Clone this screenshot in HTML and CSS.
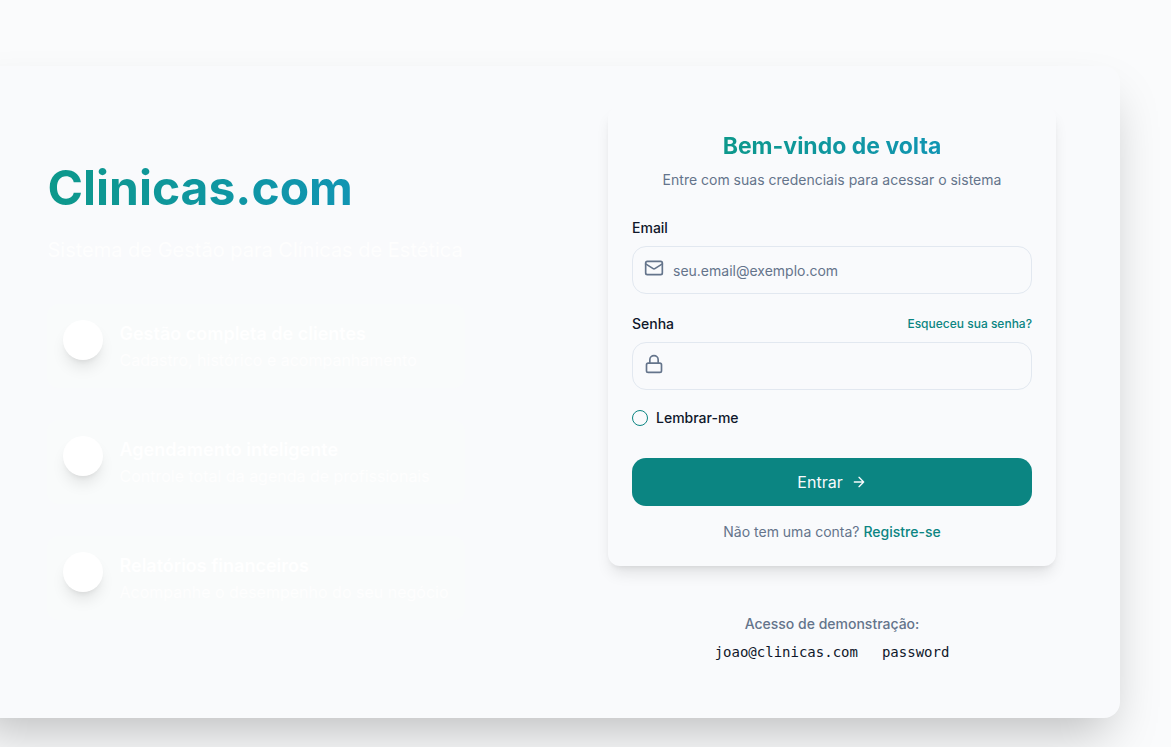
FILE: index.html
```html
<!DOCTYPE html>
<html lang="pt-BR">
<head>
<meta charset="utf-8">
<meta name="viewport" content="width=device-width, initial-scale=1">
<title>Clinicas.com</title>
<link rel="stylesheet" href="styles.css">
</head>
<body>
<main class="page">
  <div class="panel">
    <section class="intro">
      <div class="intro-content">
        <h1 class="brand"><span class="gradient-text">Clinicas.com</span></h1>
        <p class="tagline">Sistema de Gestão para Clínicas de Estética</p>
        <ul class="features">
          <li class="feature">
            <span class="feature-icon"></span>
            <div><h2 class="feature-title">Gestão completa de clientes</h2><p class="feature-text">Cadastro, histórico e acompanhamento</p></div>
          </li>
          <li class="feature">
            <span class="feature-icon"></span>
            <div><h2 class="feature-title">Agendamento inteligente</h2><p class="feature-text">Controle total da agenda de profissionais</p></div>
          </li>
          <li class="feature">
            <span class="feature-icon"></span>
            <div><h2 class="feature-title">Relatórios financeiros</h2><p class="feature-text">Acompanhe o desempenho do seu negócio</p></div>
          </li>
        </ul>
      </div>
    </section>
    <section class="access">
      <div class="card">
        <h2 class="welcome"><span class="gradient-text">Bem-vindo de volta</span></h2>
        <p class="lead">Entre com suas credenciais para acessar o sistema</p>
        <form class="form">
          <div class="field">
            <label class="label" for="email">Email</label>
            <div class="control">
              <svg class="control-icon" viewBox="0 0 24 24" aria-hidden="true"><rect x="2" y="4" width="20" height="16" rx="2"/><path d="m22 7-8.97 5.7a1.94 1.94 0 0 1-2.06 0L2 7"/></svg>
              <input class="input" id="email" type="email" placeholder="seu.email@exemplo.com">
            </div>
          </div>
          <div class="field">
            <div class="label-row">
              <label class="label" for="password">Senha</label>
              <a class="forgot" href="#">Esqueceu sua senha?</a>
            </div>
            <div class="control">
              <svg class="control-icon" viewBox="0 0 24 24" aria-hidden="true"><rect x="3" y="11" width="18" height="11" rx="2"/><path d="M7 11V7a5 5 0 0 1 10 0v4"/></svg>
              <input class="input" id="password" type="password">
            </div>
          </div>
          <div class="remember">
            <input class="check" id="remember" type="checkbox">
            <label class="label" for="remember">Lembrar-me</label>
          </div>
          <button class="submit" type="submit">Entrar
            <svg class="submit-icon" viewBox="0 0 24 24" aria-hidden="true"><path d="M5 12h14M12 5l7 7-7 7"/></svg>
          </button>
        </form>
        <p class="register">Não tem uma conta? <a class="register-link" href="#">Registre-se</a></p>
      </div>
      <div class="demo">
        <p class="demo-title">Acesso de demonstração:</p>
        <div class="demo-data"><code>joao@clinicas.com</code><code>password</code></div>
      </div>
    </section>
  </div>
</main>
</body>
</html>
```
FILE: styles.css
```css
:root {
  --primary: #0b8582;
  --ink: #0f172a;
  --muted: #64748b;
  --surface: #f9fafc;
  --line: #e2e8f0;
}
* { box-sizing: border-box; margin: 0; }
body {
  background: #fafbfc;
  color: var(--ink);
  font-family: Inter, "Liberation Sans", sans-serif;
  font-size: 14px;
  line-height: 20px;
}
a { text-decoration: none; }
.page {
  padding: 66px 51px 29px 0;
}
.panel {
  display: grid;
  grid-template-columns: 1fr 1fr;
  margin-left: -32px;
  background: var(--surface);
  border-radius: 16px;
  box-shadow: 0 25px 50px -12px rgba(0, 0, 0, 0.25);
}
.gradient-text {
  background: linear-gradient(to right, #0d988b, #1195b3);
  -webkit-background-clip: text;
  background-clip: text;
  color: transparent;
}
.intro {
  display: flex;
  align-items: center;
  justify-content: center;
  color: #fff;
}
.brand {
  font-size: 48px;
  line-height: 48px;
  font-weight: 700;
}
.tagline {
  margin: 24px 0 40px;
  font-size: 20px;
  line-height: 28px;
  color: #fefefe;
}
.features {
  display: grid;
  gap: 32px;
  padding: 0;
  list-style: none;
}
.feature {
  display: flex;
  align-items: flex-start;
  gap: 16px;
  padding: 16px;
  border-radius: 12px;
  background: #f9fbfb;
}
.feature-icon {
  flex: none;
  width: 40px;
  height: 40px;
  border-radius: 50%;
  background: #fff;
  box-shadow: 0 10px 15px -3px rgba(0, 0, 0, 0.1), 0 4px 6px -4px rgba(0, 0, 0, 0.1);
}
.feature-title {
  font-size: 18px;
  line-height: 28px;
  font-weight: 600;
}
.feature-text {
  font-size: 16px;
  line-height: 24px;
  color: #fefefe;
}
.access {
  display: flex;
  flex-direction: column;
  align-items: center;
  padding: 40px 48px 56px;
}
.card {
  width: 100%;
  max-width: 448px;
  padding: 24px;
  border-radius: 12px;
  background: var(--surface);
  box-shadow: 0 10px 15px -3px rgba(0, 0, 0, 0.1), 0 4px 6px -4px rgba(0, 0, 0, 0.1);
}
.welcome {
  font-size: 23px;
  line-height: 32px;
  font-weight: 700;
  text-align: center;
}
.lead {
  margin: 8px 0 28px;
  color: var(--muted);
  text-align: center;
}
.form {
  display: grid;
}
.field {
  margin-bottom: 20px;
}
.label {
  font-weight: 500;
}
.field > .label {
  display: block;
}
.label-row {
  display: flex;
  justify-content: space-between;
}
.forgot {
  font-size: 12px;
  font-weight: 500;
  color: var(--primary);
}
.control {
  position: relative;
  margin-top: 8px;
}
.control-icon {
  position: absolute;
  top: 12px;
  left: 12px;
  width: 20px;
  height: 20px;
  fill: none;
  stroke: var(--muted);
  stroke-width: 2;
  stroke-linecap: round;
  stroke-linejoin: round;
}
.input {
  display: block;
  width: 100%;
  height: 48px;
  padding: 8px 12px 8px 40px;
  border: 1px solid var(--line);
  border-radius: 14px;
  background: var(--surface);
  color: var(--ink);
  font: inherit;
}
.input::placeholder { color: var(--muted); }
.remember {
  display: flex;
  align-items: center;
  gap: 8px;
  height: 16px;
}
.check {
  appearance: none;
  width: 16px;
  height: 16px;
  border: 1px solid var(--primary);
  border-radius: 50%;
}
.submit {
  display: flex;
  align-items: center;
  justify-content: center;
  gap: 8px;
  height: 48px;
  margin: 32px 0 16px;
  border: 0;
  border-radius: 14px;
  background: var(--primary);
  color: #f8fafc;
  font: inherit;
  font-size: 16px;
}
.submit-icon {
  width: 16px;
  height: 16px;
  fill: none;
  stroke: currentColor;
  stroke-width: 2;
  stroke-linecap: round;
  stroke-linejoin: round;
}
.register {
  color: var(--muted);
  text-align: center;
}
.register-link {
  font-weight: 500;
  color: var(--primary);
}
.demo {
  margin-top: 48px;
  text-align: center;
}
.demo-title {
  font-weight: 500;
  color: var(--muted);
}
.demo-data {
  display: flex;
  justify-content: center;
  gap: 24px;
  margin-top: 8px;
}
.demo-data code {
  font-family: "DejaVu Sans Mono", monospace;
  font-size: 14px;
}
```
